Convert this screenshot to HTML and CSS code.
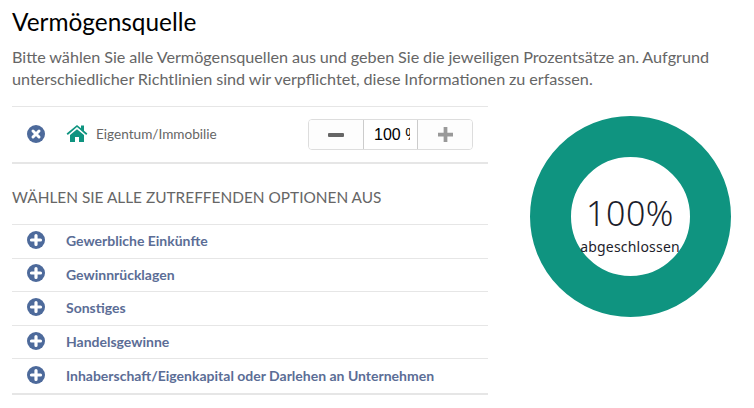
FILE: index.html
```html
<!DOCTYPE html>
<html lang="de">

<head>
    <meta charset="UTF-8">
    <meta name="viewport" content="width=device-width, initial-scale=1.0">
    <title>Vermögensquelle</title>
    <link rel="stylesheet" href="styles.css">
</head>

<body>
    <h1 class="page-title">Vermögensquelle</h1>
    <p class="intro">Bitte wählen Sie alle Vermögensquellen aus und geben Sie die jeweiligen Prozentsätze an. Aufgrund
        unterschiedlicher Richtlinien sind wir verpflichtet, diese Informationen zu erfassen.</p>

    <div class="columns">
        <div class="left-col">
            <div class="selected-row">
                <svg class="round-icon" viewBox="0 0 18 18">
                    <circle cx="9" cy="9" r="9" fill="#4d6a9b" />
                    <path d="M6 6l6 6M12 6l-6 6" stroke="#fff" stroke-width="3" stroke-linecap="round" />
                </svg>
                <svg class="home-icon" viewBox="0 0 22 18">
                    <path d="M0.6 9.6L11 1l4 3.3V1.6h3v5.2l3.4 2.8-1.2 1.4L11 3 1.8 11z" fill="#0f9480" />
                    <path d="M4 11l7-5.8 7 5.8v7h-5v-5H9v5H4z" fill="#0f9480" />
                </svg>
                <span class="selected-label">Eigentum/Immobilie</span>
                <div class="stepper">
                    <button class="step-btn minus">
                        <svg viewBox="0 0 16 4" width="16" height="4"><rect width="16" height="4" rx="1" fill="#666" /></svg>
                    </button>
                    <input class="step-input" type="text" value="100 %">
                    <button class="step-btn plus">
                        <svg viewBox="0 0 16 16" width="15" height="15"><path d="M6 0h4v6h6v4h-6v6H6v-6H0V6h6z" fill="#999" /></svg>
                    </button>
                </div>
            </div>

            <h2 class="options-title">WÄHLEN SIE ALLE ZUTREFFENDEN OPTIONEN AUS</h2>

            <ul class="options">
                <li><svg class="round-icon" viewBox="0 0 18 18"><use href="#plus-circle" /></svg>Gewerbliche Einkünfte</li>
                <li><svg class="round-icon" viewBox="0 0 18 18"><use href="#plus-circle" /></svg>Gewinnrücklagen</li>
                <li><svg class="round-icon" viewBox="0 0 18 18"><use href="#plus-circle" /></svg>Sonstiges</li>
                <li><svg class="round-icon" viewBox="0 0 18 18"><use href="#plus-circle" /></svg>Handelsgewinne</li>
                <li><svg class="round-icon" viewBox="0 0 18 18"><use href="#plus-circle" /></svg>Inhaberschaft/Eigenkapital oder Darlehen an Unternehmen</li>
            </ul>
        </div>

        <div class="donut">
            <div class="donut-value">100%</div>
            <div class="donut-label">abgeschlossen</div>
        </div>
    </div>

    <svg class="icon-defs" width="0" height="0">
        <symbol id="plus-circle" viewBox="0 0 18 18">
            <circle cx="9" cy="9" r="9" fill="#4d6a9b" />
            <path d="M9 4.5v9M4.5 9h9" stroke="#fff" stroke-width="3.2" stroke-linecap="round" />
        </symbol>
    </svg>
</body>

</html>
```

FILE: styles.css
```css
body {
    font-family: 'Lato', sans-serif;
    margin: 0;
    padding: 0 12px;
    background-color: #fff;
    overflow: hidden;
}

.page-title {
    margin: 0;
    padding-top: 8px;
    font-size: 24.4px;
    line-height: 28px;
    font-weight: 400;
    color: #000;
}

.intro {
    margin: 10px 0 0;
    font-size: 16.2px;
    line-height: 22px;
    color: #666;
    word-spacing: -0.3px;
}

.columns {
    display: flex;
    margin-top: 16px;
}

.left-col {
    width: 476px;
}

.selected-row {
    display: flex;
    align-items: center;
    height: 55px;
    border-top: 1px solid #e6e6e6;
    border-bottom: 2px solid #e6e6e6;
}

.round-icon {
    width: 18px;
    height: 18px;
    margin: -2px 21.3px 0 14.7px;
    flex-shrink: 0;
}

.home-icon {
    width: 22px;
    height: 18px;
    margin-right: 8px;
    margin-top: -3px;
}

.selected-label {
    font-size: 13.6px;
    color: #666;
    margin-top: -2px;
}

.stepper {
    display: flex;
    margin-left: auto;
    margin-right: 15px;
    width: 165px;
    height: 31px;
    box-sizing: border-box;
    border: 1px solid #ddd;
    border-radius: 4px;
    overflow: hidden;
}

.step-btn {
    flex: 1;
    padding: 0;
    border: 0;
    background-color: #fdfdfd;
    display: flex;
    align-items: center;
    justify-content: center;
}

.step-input {
    width: 55px;
    box-sizing: border-box;
    padding: 0 7px 0 10px;
    border: 0;
    border-left: 1px solid #ccc;
    border-right: 1px solid #ccc;
    font-family: 'Liberation Sans', sans-serif;
    font-size: 16px;
    color: #000;
}

.options-title {
    margin: 24px 0 17px;
    font-size: 15.4px;
    line-height: 19px;
    font-weight: 400;
    color: #666;
}

.options {
    list-style: none;
    margin: 0;
    padding: 0;
    border-top: 1px solid #e6e6e6;
    border-bottom: 2px solid #e6e6e6;
}

.options li {
    display: flex;
    align-items: center;
    box-sizing: border-box;
    height: 33.6px;
    padding-bottom: 1px;
    border-bottom: 1px solid #e6e6e6;
    font-size: 14px;
    font-weight: 700;
    color: #5b6d96;
}

.options li:last-child {
    border-bottom: 0;
}

.donut {
    width: 201px;
    height: 201px;
    box-sizing: border-box;
    margin: 10px 0 0 41.5px;
    border: 41px solid #0f9480;
    border-radius: 50%;
    display: flex;
    flex-direction: column;
    align-items: center;
    justify-content: center;
    font-family: 'Noto Sans', sans-serif;
    color: #1d1d2b;
}

.donut-value {
    font-size: 34px;
    line-height: 40px;
    font-weight: 300;
    letter-spacing: 0.5px;
    margin-top: 16px;
}

.donut-label {
    font-size: 14px;
    line-height: 20px;
    letter-spacing: 0.2px;
    white-space: nowrap;
    margin-top: 4px;
}

.icon-defs {
    position: absolute;
}
```
